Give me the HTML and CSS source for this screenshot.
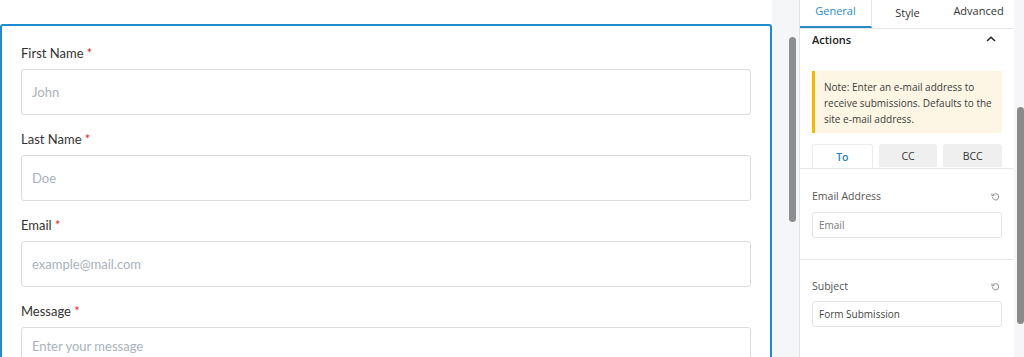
FILE: index.html
```html
<!DOCTYPE html>
<html lang="en">
<head>
    <meta charset="UTF-8">
    <title>Form Editor</title>
    <link rel="stylesheet" href="styles.css">
</head>
<body>

<div class="canvas">
    <form class="form-card">
        <div class="field">
            <label class="label">First Name <span class="req">*</span></label>
            <input class="input" type="text" placeholder="John">
        </div>
        <div class="field">
            <label class="label">Last Name <span class="req">*</span></label>
            <input class="input" type="text" placeholder="Doe">
        </div>
        <div class="field">
            <label class="label">Email <span class="req">*</span></label>
            <input class="input" type="text" placeholder="example@mail.com">
        </div>
        <div class="field">
            <label class="label">Message <span class="req">*</span></label>
            <textarea class="input textarea" placeholder="Enter your message"></textarea>
        </div>
    </form>
</div>

<div class="gutter">
    <div class="thumb"></div>
</div>

<div class="sidebar">
    <div class="tabs">
        <div class="tab active">General</div>
        <div class="tab tab-style">Style</div>
        <div class="tab">Advanced</div>
    </div>

    <div class="section-head">
        <span>Actions</span>
        <svg width="10" height="6" viewBox="0 0 10 6"><path d="M1 5 L5 1.2 L9 5" fill="none" stroke="#222" stroke-width="1.5"/></svg>
    </div>

    <div class="note">Note: Enter an e-mail address to receive submissions. Defaults to the site e-mail address.</div>

    <div class="mail-tabs">
        <div class="mail-tab current">To</div>
        <div class="mail-tab">CC</div>
        <div class="mail-tab">BCC</div>
    </div>

    <div class="control">
        <div class="control-head">
            <span>Email Address</span>
            <svg class="reset" width="9" height="9" viewBox="0 0 16 16"><path d="M3.5 5.5 A5.5 5.5 0 1 1 2.6 9" fill="none" stroke="#9a9a9a" stroke-width="1.8"/><path d="M1.5 2.5 L1.8 6.6 L5.8 6" fill="none" stroke="#9a9a9a" stroke-width="1.8"/></svg>
        </div>
        <input class="side-input" type="text" placeholder="Email">
    </div>

    <div class="control last">
        <div class="control-head">
            <span>Subject</span>
            <svg class="reset" width="9" height="9" viewBox="0 0 16 16"><path d="M3.5 5.5 A5.5 5.5 0 1 1 2.6 9" fill="none" stroke="#9a9a9a" stroke-width="1.8"/><path d="M1.5 2.5 L1.8 6.6 L5.8 6" fill="none" stroke="#9a9a9a" stroke-width="1.8"/></svg>
        </div>
        <input class="side-input filled" type="text" value="Form Submission">
    </div>
</div>

<div class="side-scroll">
    <div class="side-thumb"></div>
</div>

</body>
</html>
```

FILE: styles.css
```css
body {
    margin: 0;
    height: 357px;
    overflow: hidden;
    display: flex;
    background-color: #fff;
    font-family: "Open Sans", sans-serif;
}

.canvas {
    width: 772px;
    padding-top: 24px;
    background-color: #fff;
}

.form-card {
    border: 2px solid #1b8ccf;
    border-bottom: none;
    border-radius: 3px 3px 0 0;
    padding: 17px 19px 0 19px;
    height: 330px;
    font-family: Lato, sans-serif;
}

.field {
    margin-bottom: 14px;
}

.label {
    display: block;
    height: 20px;
    line-height: 20px;
    margin-bottom: 6px;
    font-size: 13px;
    color: #333;
}

.req {
    color: #e0292d;
}

.input {
    display: block;
    box-sizing: border-box;
    width: 100%;
    height: 46px;
    padding: 0 10px;
    border: 1px solid #dcdcdc;
    border-radius: 3px;
    font-family: Lato, sans-serif;
    font-size: 13px;
    color: #333;
    outline: none;
}

.input::placeholder {
    color: #a8b2bd;
}

.textarea {
    height: 60px;
    padding-top: 10px;
    resize: none;
}

.gutter {
    width: 27px;
    background-color: #f5f6f8;
    border-right: 1px solid #e3e3e3;
    position: relative;
}

.thumb {
    position: absolute;
    left: 17px;
    top: 37px;
    width: 7px;
    height: 185px;
    border-radius: 4px;
    background-color: #8d8d8d;
}

.sidebar {
    width: 214px;
    background-color: #fff;
}

.tabs {
    display: flex;
    height: 28px;
    border-bottom: 1px solid #e6e6e6;
}

.tab {
    flex: 1;
    text-align: center;
    font-size: 11px;
    line-height: 22px;
    color: #333;
}

.tab.active {
    color: #2a8bc4;
    border-bottom: 2px solid #2a8bc4;
    border-right: 1px solid #e6e6e6;
    height: 26px;
}

.tab-style {
    padding-top: 2px;
}

.section-head {
    display: flex;
    justify-content: space-between;
    align-items: center;
    padding: 0 18px 0 12px;
    height: 20px;
    font-size: 11px;
    font-weight: 600;
    color: #222;
}

.note {
    margin: 22px 12px 0 12px;
    padding: 8px 8px 6px 9px;
    border-left: 3px solid #f5b800;
    background-color: #fef6e4;
    font-size: 10px;
    line-height: 16px;
    color: #3a3a3a;
}

.mail-tabs {
    display: flex;
    gap: 6px;
    margin-top: 11px;
    padding: 0 12px;
    border-bottom: 1px solid #e8e8e8;
}

.mail-tab {
    flex: 1;
    height: 23px;
    line-height: 24px;
    text-align: center;
    font-size: 10.5px;
    color: #333;
    background-color: #efefef;
    border-radius: 3px 3px 0 0;
}

.mail-tab.current {
    background-color: #fff;
    color: #1f7fc0;
    font-weight: 600;
    border: 1px solid #ececec;
    border-bottom: none;
}

.control {
    padding: 19px 12px 21px 12px;
    border-bottom: 1px solid #e8e8e8;
}

.control.last {
    padding-top: 18px;
    padding-bottom: 40px;
    border-bottom: none;
}

.control-head {
    display: flex;
    justify-content: space-between;
    align-items: center;
    height: 16px;
    margin-bottom: 8px;
    font-size: 10.5px;
    color: #555;
}

.control.last .control-head {
    margin-bottom: 7px;
}

.reset {
    margin-right: 2px;
}

.side-input {
    display: block;
    box-sizing: border-box;
    width: 100%;
    height: 26px;
    padding: 0 6px;
    border: 1px solid #e4e4e4;
    border-radius: 3px;
    font-family: "Open Sans", sans-serif;
    font-size: 10px;
    color: #444;
    outline: none;
}

.side-input::placeholder {
    color: #777;
}

.side-scroll {
    flex: 1;
    background-color: #f6f6f8;
    position: relative;
}

.side-thumb {
    position: absolute;
    left: 3px;
    top: 107px;
    width: 7px;
    height: 217px;
    border-radius: 4px;
    background-color: #8a8a8a;
}
```
